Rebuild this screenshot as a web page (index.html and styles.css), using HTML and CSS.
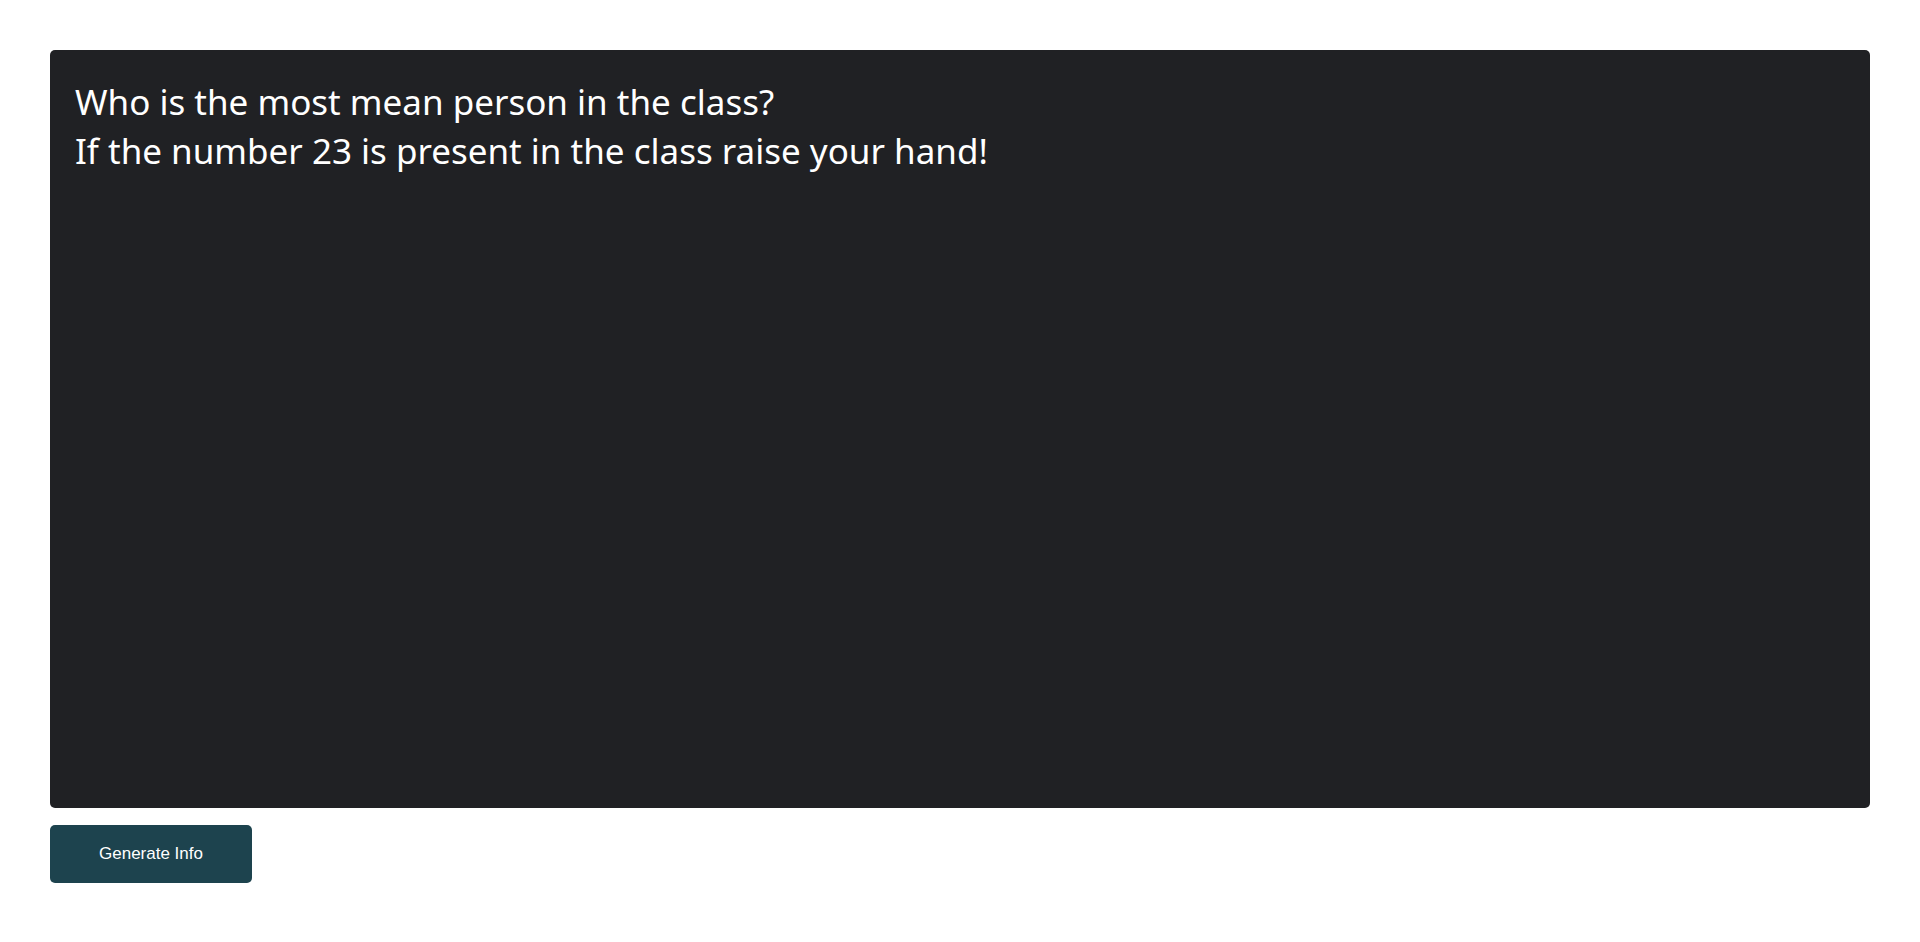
FILE: index.html
```html
<!DOCTYPE html>
<html lang="en">
<head>
<meta charset="utf-8">
<meta name="viewport" content="width=device-width, initial-scale=1">
<title>Generate Info</title>
<link rel="stylesheet" href="styles.css">
</head>
<body>
<main class="page">
  <section class="board" aria-live="polite">
    <p class="line">Who is the most mean person in the class?</p>
    <p class="line">If the number 23 is present in the class raise your hand!</p>
  </section>
  <button class="generate" type="button">Generate Info</button>
</main>
</body>
</html>
```

FILE: styles.css
```css
* {
  box-sizing: border-box;
}

body {
  margin: 0;
  background: #fff;
}

.page {
  display: flex;
  flex-direction: column;
  align-items: flex-start;
  gap: 17px;
  min-height: 100vh;
  padding: 50px 50px 59px;
}

.board {
  flex: 1;
  align-self: stretch;
  padding: 27px 25px 25px;
  border-radius: 5px;
  background: #202124;
  color: #fff;
  font-family: "Segoe UI", "Noto Sans", "Open Sans", sans-serif;
  font-size: 35px;
  line-height: 49px;
}

.line {
  margin: 0;
}

.generate {
  padding: 20px 49px;
  border: 0;
  border-radius: 5px;
  background: #1d434e;
  color: #fff;
  font-family: Arial, "Liberation Sans", sans-serif;
  font-size: 17px;
  line-height: 18px;
  cursor: pointer;
}
```
